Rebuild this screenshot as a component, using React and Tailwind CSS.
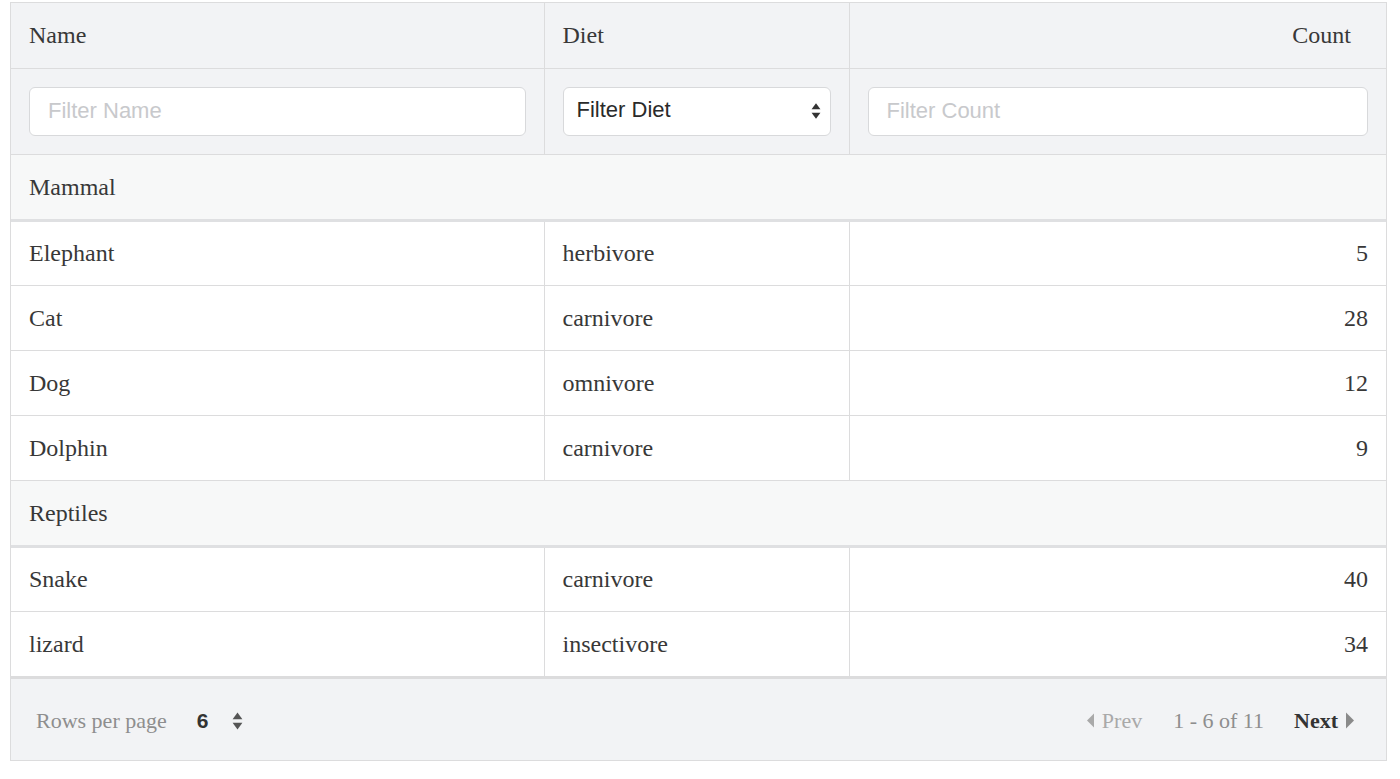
const groups = [
  {
    name: "Mammal",
    rows: [
      { name: "Elephant", diet: "herbivore", count: 5 },
      { name: "Cat", diet: "carnivore", count: 28 },
      { name: "Dog", diet: "omnivore", count: 12 },
      { name: "Dolphin", diet: "carnivore", count: 9 },
    ],
  },
  {
    name: "Reptiles",
    rows: [
      { name: "Snake", diet: "carnivore", count: 40 },
      { name: "lizard", diet: "insectivore", count: 34 },
    ],
  },
];

const serif = { fontFamily: '"Liberation Serif", "Times New Roman", serif' };
const sans = { fontFamily: '"Liberation Sans", Arial, sans-serif' };

function UpDown({ className = "", w = 9, h = 16 }) {
  return (
    <svg width={w} height={h} viewBox="0 0 9 16" className={className}>
      <path d="M4.5 1 L8.5 6.5 L0.5 6.5 Z" fill="currentColor" />
      <path d="M4.5 15 L8.5 9.5 L0.5 9.5 Z" fill="currentColor" />
    </svg>
  );
}

export default function App() {
  return (
    <div className="min-h-[779px] bg-white pt-[2px] pl-[10px]">
      <div
        className="w-[1377px] border border-[#dcdcdd] text-[#383838]"
        style={serif}
      >
        <table className="w-full table-fixed border-collapse text-[24px]">
          <colgroup>
            <col className="w-[533px]" />
            <col className="w-[305px]" />
            <col />
          </colgroup>
          <thead className="bg-[#f2f3f5]">
            <tr className="h-[65px] border-b border-[#dcdcdd]">
              <th className="border-r border-[#dcdcdd] px-[18px] text-left font-normal">
                Name
              </th>
              <th className="border-r border-[#dcdcdd] px-[18px] text-left font-normal">
                Diet
              </th>
              <th className="px-[35px] text-right font-normal">Count</th>
            </tr>
            <tr className="h-[86px]">
              <td className="border-r border-[#dcdcdd] px-[18px]">
                <input
                  placeholder="Filter Name"
                  className="h-[49px] w-full rounded-[6px] border border-[#d8d9db] bg-white px-[18px] text-[22px] text-[#333] placeholder:text-[#c8c9cc] outline-none"
                  style={sans}
                />
              </td>
              <td className="border-r border-[#dcdcdd] px-[18px]">
                <div
                  className="flex h-[49px] w-full items-center justify-between rounded-[6px] border border-[#d8d9db] bg-white pb-[3px] pl-[13px] pr-[9px] text-[22px] text-[#2a2a2a]"
                  style={sans}
                >
                  <span>Filter Diet</span>
                  <UpDown className="mt-[3px] text-[#333]" w={10} h={18} />
                </div>
              </td>
              <td className="px-[18px]">
                <input
                  placeholder="Filter Count"
                  className="h-[49px] w-full rounded-[6px] border border-[#d8d9db] bg-white px-[18px] text-[22px] text-[#333] placeholder:text-[#c8c9cc] outline-none"
                  style={sans}
                />
              </td>
            </tr>
          </thead>
          <tbody>
            {groups.map((g) => (
              <>
                <tr
                  key={g.name}
                  className="h-[66px] border-t border-b-[3px] border-t-[#dcdcdd] border-b-[#dfe0e2] bg-[#f7f8f8]"
                >
                  <td colSpan={3} className="px-[18px]">
                    {g.name}
                  </td>
                </tr>
                {g.rows.map((r) => (
                  <tr key={r.name} className="h-[65px] border-b border-[#dcdcdd] bg-white">
                    <td className="border-r border-[#dcdcdd] px-[18px]">{r.name}</td>
                    <td className="border-r border-[#dcdcdd] px-[18px]">{r.diet}</td>
                    <td className="px-[18px] text-right">{r.count}</td>
                  </tr>
                ))}
              </>
            ))}
          </tbody>
        </table>
        <div className="flex h-[83px] items-center justify-between border-t-2 border-[#dcdcdd] bg-[#f2f3f5] pl-[25px] pr-[32px] pt-[3px]">
          <div className="flex items-center">
            <span className="text-[22px] text-[#8e8e8e]">Rows per page</span>
            <span className="ml-[30px] text-[21px] font-bold text-[#333]" style={sans}>
              6
            </span>
            <UpDown className="ml-[24px] text-[#555]" w={11} h={20} />
          </div>
          <div className="flex items-center text-[22px]">
            <span className="flex items-center text-[#a9a9a9]">
              <svg width="7" height="15" viewBox="0 0 7 14" className="mr-[8px]">
                <path d="M7 0 L0 7 L7 14 Z" fill="currentColor" />
              </svg>
              Prev
            </span>
            <span className="ml-[31px] text-[#8e8e8e]">1 - 6 of 11</span>
            <span className="ml-[30px] flex items-center font-bold text-[#333]">
              Next
              <svg width="8" height="17" viewBox="0 0 8 16" className="ml-[8px] text-[#8a8a8a]">
                <path d="M0 0 L8 8 L0 16 Z" fill="currentColor" />
              </svg>
            </span>
          </div>
        </div>
      </div>
    </div>
  );
}
